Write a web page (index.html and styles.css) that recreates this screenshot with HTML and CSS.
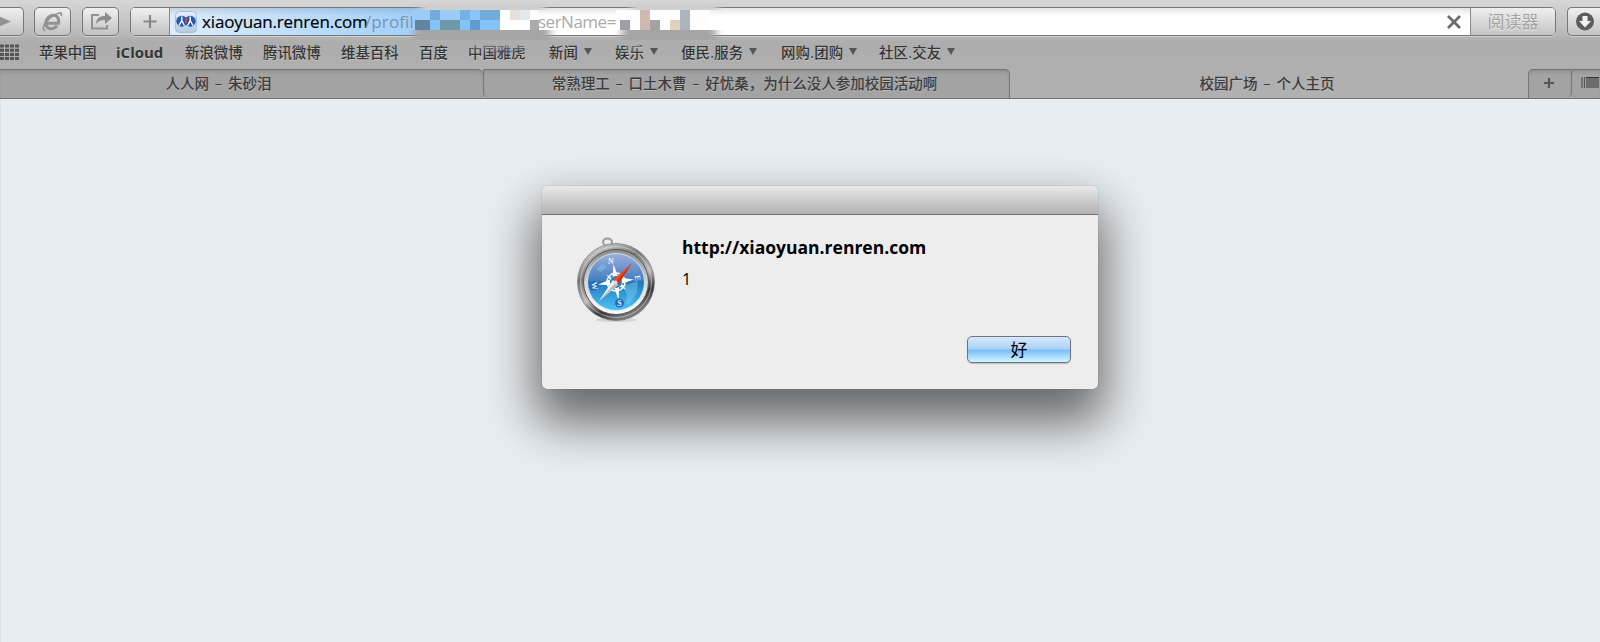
FILE: index.html
```html
<!DOCTYPE html>
<html lang="zh-CN">
<head>
<meta charset="utf-8">
<title>校园广场 - 个人主页</title>
<link rel="stylesheet" href="styles.css">
</head>
<body>
<header class="chrome">
  <div class="toolbar">
    <div class="btn btn-forward"><svg width="23" height="27" viewBox="0 0 23 27"><path d="M-4 7 L11 13.500 L-4 20Z" fill="#929292"/></svg></div>
    <div class="btn"><svg width="34" height="27" viewBox="0 0 34 27"><g fill="none" stroke="#929292"><path d="M12 15.300H23.600C24.500 8.800 20.500 6.500 17 7.400C12.500 8.600 10 12.500 11 17C12 21.500 19.500 22 22 17.600" stroke-width="3"/><path d="M10.500 22C5.500 23 9 14 17 8.500C22 4.700 28.500 3 26 8" stroke-width="1.600"/></g></svg></div>
    <div class="btn"><svg width="35" height="27" viewBox="0 0 35 27"><path d="M16 7H9V20.500H24V17" fill="none" stroke="#929292" stroke-width="2"/><path d="M13 16C13.500 10 17 8 22 8V4L29 10L22 16V12C18 12 15.500 13 13 16Z" fill="#8c8c8c"/></svg></div>
    <div class="field">
      <div class="add"><svg width="38" height="27" viewBox="0 0 38 27"><path d="M12.500 13.500H25.500M19 7V20" stroke="#888" stroke-width="2.200"/></svg></div>
      <div class="address">
        <svg class="favicon" width="22" height="22" viewBox="0 0 22 22"><defs><linearGradient id="fv" x2="0" y2="1"><stop offset="0" stop-color="#e6effb"/><stop offset="1" stop-color="#b3c8e4"/></linearGradient></defs><rect x=".5" y=".5" width="21" height="21" rx="4" fill="url(#fv)" stroke="#a9bcd8"/><circle cx="6.800" cy="10.200" r="5.500" fill="#2359ae"/><circle cx="15.200" cy="10.200" r="5.500" fill="#2359ae"/><path d="M6.800 5.500V9.500L4 14.500M6.800 9.500L9.300 14.500M15.200 5.500V9.500L12.700 14.500M15.200 9.500L18 14.500" fill="none" stroke="#fff" stroke-width="1.400"/><rect x="10.200" y="7" width="1.800" height="5" rx=".9" fill="#d9492e"/></svg>
        <span class="host">xiaoyuan.renren.com</span><span class="path">/profil</span><span class="query">serName=</span>
        <svg class="stop" width="16" height="16" viewBox="0 0 16 16"><path d="M2 2L14 14M14 2L2 14" stroke="#6b6b6b" stroke-width="2.800"/></svg>
      </div>
      <div class="reader">阅读器</div>
    </div>
    <div class="btn btn-download"><svg width="34" height="27" viewBox="0 0 34 27"><circle cx="17" cy="13.500" r="9" fill="#5c5c5c"/><path d="M14.500 8H19.500V13H23L17 19.500L11 13H14.500Z" fill="#f2f2f2"/></svg></div>
  </div>
  <nav class="bookmarks">
    <svg class="grid-icon" width="20" height="16" viewBox="0 0 20 16"><path d="M0 2H19M0 6.200H19M0 10.400H19M0 14.500H19" stroke="#555" stroke-width="3" stroke-dasharray="4 1"/></svg>
    <span>苹果中国</span><span class="latin">iCloud</span><span>新浪微博</span><span>腾讯微博</span><span>维基百科</span><span>百度</span><span>中国雅虎</span>
    <span class="folder">新闻</span><span class="folder">娱乐</span><span class="folder">便民.服务</span><span class="folder">网购.团购</span><span class="folder">社区.交友</span>
  </nav>
  <svg class="mosaic" width="360" height="56" viewBox="0 0 360 56">
    <defs>
      <filter id="soft" x="-10%" width="120%" y="-20%" height="140%"><feGaussianBlur stdDeviation="4 .4"/></filter>
      <linearGradient id="haze" x2="0" y2="1"><stop offset="0" stop-color="#acacac" stop-opacity=".85"/><stop offset="1" stop-color="#acacac" stop-opacity="0"/></linearGradient>
    </defs>
    <path fill="#fdfdfd" d="M100 10h38v20h-38zM216 10h94v20h-94z"/>
    <g filter="url(#soft)"><path d="M20 4H145V10H20ZM232 4H318V10H232Z" fill="#cfcfcf"/><path d="M14 30H150V40H14ZM222 30H316V40H222Z" fill="#a5a5a5"/></g>
    <path d="M70 40H134V54H70ZM225 40H240V54H225Z" fill="url(#haze)"/>
    <path d="M93 50H118V53H93Z" fill="#55589a" opacity=".3"/>
    <g shape-rendering="crispEdges">
      <path fill="#9bcbf6" d="M12 10h48v10h-48z"/><path fill="#70abd9" d="M30 10h10v10h-10zM80 10h20v10h-20z"/>
      <path fill="#78b0e1" d="M60 10h10v10h-10z"/><path fill="#8ac5fb" d="M70 10h10v10h-10z"/>
      <path fill="#62859d" d="M15 20h15v10h-15z"/><path fill="#83c2f6" d="M30 20h10v10h-10zM60 20h10v10h-10zM80 20h20v10h-20z"/><path fill="#6d98a8" d="M40 20h20v10h-20z"/><path fill="#619ad1" d="M70 20h10v10h-10z"/>
      <path fill="#e5dfde" d="M110 10h10v10h-10z"/><path fill="#e4e8ea" d="M120 10h10v10h-10z"/><path fill="#aaa" d="M130 20h9v10h-9z"/>
      <path fill="#9f9fa9" d="M220 20h10v10h-10z"/><path fill="#d0b8b1" d="M240 10h10v20h-10z"/><path fill="#a4a4a4" d="M250 20h10v10h-10z"/><path fill="#e0d1bd" d="M270 20h10v10h-10z"/><path fill="#aab5bf" d="M280 10h10v20h-10z"/>
    </g>
  </svg>
  <div class="tabs">
    <div class="tab tab-first">人人网 – 朱砂泪</div>
    <div class="tab tab-second">常熟理工 – 口土木曹 – 好忧桑，为什么没人参加校园活动啊</div>
    <div class="tab tab-active">校园广场 – 个人主页</div>
    <div class="tab tab-new"><svg width="12" height="12" viewBox="0 0 12 12"><path d="M1 6H11M6 1V11" stroke="#555" stroke-width="2.200"/></svg></div>
    <div class="tab tab-all"><svg width="18" height="12" viewBox="0 0 18 12"><path d="M1 0V11M3.500 0V11" stroke="#555" stroke-width="1.200"/><path d="M5 0H18V11H5Z" fill="#6c6c6c"/><path d="M5 .5H18" stroke="#333"/></svg></div>
  </div>
</header>
<main class="page">
  <section class="dialog">
    <div class="titlebar"></div>
    <div class="content">
      <svg class="compass" width="80" height="88" viewBox="0 0 80 88">
        <defs>
          <linearGradient id="rim" x1="0" y1="0" x2=".5" y2="1"><stop offset="0" stop-color="#f2f2f2"/><stop offset=".4" stop-color="#777"/><stop offset=".65" stop-color="#b9b9b9"/><stop offset=".85" stop-color="#333"/><stop offset="1" stop-color="#777"/></linearGradient>
          <linearGradient id="inner" x2="0" y2="1"><stop offset="0" stop-color="#8c8c8c"/><stop offset=".5" stop-color="#d5d5d5"/><stop offset="1" stop-color="#fff"/></linearGradient>
          <linearGradient id="sea" x2="0" y2="1"><stop offset="0" stop-color="#9faeda"/><stop offset=".47" stop-color="#417fc1"/><stop offset=".5" stop-color="#1f78bd"/><stop offset="1" stop-color="#4cc5f5"/></linearGradient>
        </defs>
        <ellipse cx="40" cy="84" rx="20" ry="2" fill="#bbb" opacity=".5"/>
        <ellipse cx="31.500" cy="6" rx="4.500" ry="3.600" fill="none" stroke="#999" stroke-width="2"/><path d="M28 9.500H35" stroke="#bbb" stroke-width="2"/>
        <circle cx="40" cy="46" r="38.500" fill="url(#rim)" stroke="#777" stroke-width=".7"/>
        <circle cx="40" cy="46" r="35.500" fill="none" stroke="#eee" stroke-width="1" opacity=".5"/>
        <circle cx="40" cy="46" r="32.500" fill="url(#inner)" stroke="#555" stroke-width="1"/>
        <circle cx="40" cy="46" r="28.500" fill="url(#sea)" stroke="#c8e3f3" stroke-width="1"/>
        <path d="M47 50L62 45L61 56L55 66L50 69L51 59ZM20 33L27 28L31 31L25 36Z" fill="#8bd2ef" opacity=".4"/>
        <g transform="rotate(-8 40 46)"><circle cx="40" cy="46" r="9" fill="none" stroke="#fff" stroke-width="1.500"/><path d="M40 28L43 42L58 46L43 49L40 64L37 49L22 46L37 42ZM31 37L38 43L49 37L43 44L49 55L40 49L31 55L37 46Z" fill="#fff"/><circle cx="40" cy="46" r="6" fill="#2786c2"/></g>
        <circle cx="43.500" cy="67" r="4.500" fill="#2167c6"/><circle cx="17.500" cy="50" r="4.500" fill="#2667b5"/>
        <g class="points"><text x="35" y="28">N</text><text transform="translate(61 42) rotate(80)" x="0" y="2">E</text><text x="43.500" y="70">S</text><text transform="translate(18 50) rotate(80)" x="0" y="2">W</text></g>
        <path d="M56 27L37 44L42 49Z" fill="#ef4a1d"/><path d="M56 27L39.500 46.500L42 49Z" fill="#c93312"/><path d="M23 65L37 44L42 49Z" fill="#f5f2ed"/><path d="M23 65L39.500 46.500L42 49Z" fill="#bdbab5"/><circle cx="39.500" cy="46.500" r="2" fill="#ddd"/>
      </svg>
      <div class="message">
        <h1>http://xiaoyuan.renren.com</h1>
        <p>1</p>
        <button class="ok">好</button>
      </div>
    </div>
  </section>
</main>
</body>
</html>
```

FILE: styles.css
```css
* { box-sizing: border-box; }
body { margin: 0; width: 1600px; height: 642px; overflow: hidden; background: #e8edf1; font-family: "Open Sans", "Noto Sans CJK SC", sans-serif; display: flex; flex-direction: column; }
svg { display: block; flex: none; }
.chrome { position: relative; height: 99px; flex: none; background: linear-gradient(#d6d6d6 0, #c0c0c0 28px, #adadad 42px, #b1b1b1 100%); }
.toolbar { display: flex; height: 36px; padding-top: 7px; }
.btn { width: 37px; height: 29px; flex: none; margin-right: 11px; border: 1px solid #777; border-radius: 5px; background: linear-gradient(#f0f0f0, #c2c2c2); box-shadow: 0 1px 0 #d0d0d0; }
.btn-forward { width: 24px; margin-right: 10px; border-left: 0; border-radius: 0 5px 5px 0; }
.btn-download { margin: 0; border-radius: 5px 0 0 5px; border-right: 0; width: 33px; }
.field { display: flex; width: 1426px; height: 29px; flex: none; margin-right: 11px; border: 1px solid #777; border-radius: 5px; overflow: hidden; background: #fff; box-shadow: 0 1px 0 #d0d0d0; }
.add { width: 39px; border-right: 1px solid #888; background: linear-gradient(#f0f0f0, #c2c2c2); flex: none; }
.address { display: flex; align-items: center; flex: 1; padding-left: 5px; background: linear-gradient(rgba(0,0,0,.1), transparent 8px), linear-gradient(90deg, #dcecfc, #8dc7fb 328px, #fff 328px); font-size: 17px; line-height: 27px; }
.host { margin-left: 5px; width: 163px; letter-spacing: -.15px; white-space: nowrap; color: #000; -webkit-text-stroke: .2px #000; }
.path { width: 173px; letter-spacing: .1px; color: #7895ad; }
.query { color: #aaa; letter-spacing: -.5px; }
.stop { margin-left: auto; margin-right: 8px; }
.reader { width: 85px; border-left: 1px solid #888; background: linear-gradient(#efefef, #c4c4c4); font-size: 17px; line-height: 27px; text-align: center; color: #a3a3a3; text-shadow: 0 1px 0 #eee; }
.bookmarks { display: grid; grid-template-columns: 39px 77px 69px 78px 78px 78px 49px 81px 66px 66px 100px 98px auto; align-items: center; height: 33px; padding-bottom: 2px; font-size: 14.4px; font-weight: 500; color: #353535; text-shadow: 0 1px 0 #c5c5c5; white-space: nowrap; }
.latin { font-weight: 700; font-size: 15px; }
.folder { display: flex; align-items: center; gap: 6px; }
.folder:nth-child(n+11) { letter-spacing: .2px; }
.folder::after { content: ""; border: 4.5px solid transparent; border-top: 7px solid #555; border-bottom: 0; }
.mosaic { position: absolute; left: 400px; top: 0; }
.tabs { display: flex; height: 30px; border-bottom: 1px solid #737373; }
.tab { flex: none; height: 29px; line-height: 27px; text-align: center; font-size: 14.5px; word-spacing: 2px; font-weight: 500; color: #3d3d3d; text-shadow: 0 1px 0 #bbb; white-space: nowrap; background: #a3a3a3; border-top: 1px solid #737373; box-shadow: inset 0 3px 4px -2px #858585; }
.tab-first { width: 483px; padding-right: 46px; border-radius: 0 5px 0 0; }
.tab-second { width: 527px; padding-right: 4px; border-right: 1px solid #777; border-left: 1px solid #777; border-radius: 0 5px 0 5px; }
.tab-active { width: 518px; padding-right: 4px; background: none; border-top-color: transparent; box-shadow: none; }
.tab-new { width: 44px; border-left: 1px solid #777; border-right: 1px solid #777; border-radius: 5px 0 5px 0; padding: 7px 0 0 14px; }
.tab-all { width: 28px; padding: 7px 0 0 9px; }
.page { flex: 1; display: flex; align-items: flex-start; padding: 87px 0 0 541px; border-left: 1px solid #dde2e6; }
.dialog { width: 556px; height: 203px; border-radius: 5px; background: #ededed; box-shadow: 0 0 1px rgba(0,0,0,.5), 0 27px 50px 6px rgba(0,0,0,.57); }
.titlebar { height: 29px; border-bottom: 1px solid #6f6f6f; border-radius: 5px 5px 0 0; background: linear-gradient(#e9e9e9, #b2b2b2); }
.content { display: flex; padding: 21px 27px 0 34px; }
.message { flex: 1; padding-left: 26px; display: flex; flex-direction: column; }
h1 { margin: 0; font-size: 17.5px; line-height: 22px; font-weight: 700; white-space: nowrap; }
p { margin: 10px 0 0; font-size: 16px; line-height: 22px; }
.ok { align-self: flex-end; margin-top: 46px; width: 104px; height: 27px; padding: 0 0 2px; border: 1px solid #6e7287; border-radius: 5px; font: 400 17px/21px "Noto Sans CJK SC", sans-serif; color: #000; background: linear-gradient(#d8e9fa, #a9d1f8 48%, #79bcf8 52%, #d0f8ff); box-shadow: 0 1px 1px #bbb; }
.points { font: 700 8px "Liberation Serif", serif; fill: #e6f0ff; text-anchor: middle; }
```
